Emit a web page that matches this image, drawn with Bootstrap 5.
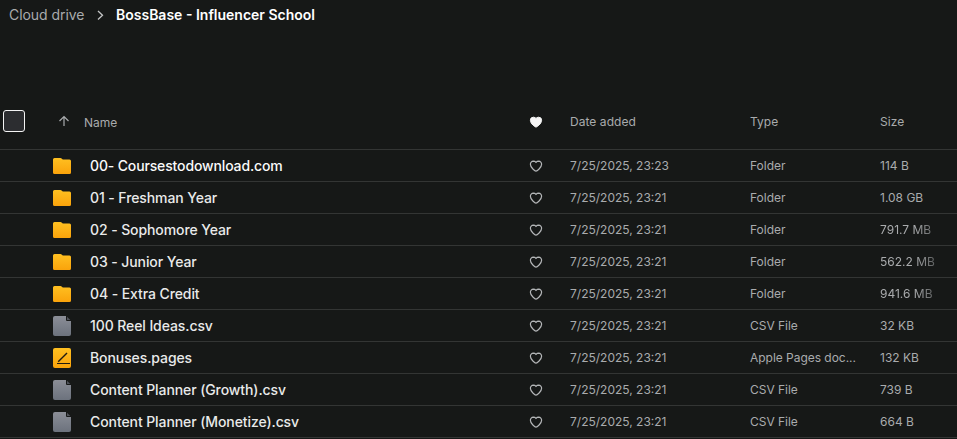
<!DOCTYPE html>
<html lang="en">
<head>
<meta charset="utf-8">
<meta name="viewport" content="width=device-width, initial-scale=1">
<title>Cloud drive</title>
<link href="https://cdn.jsdelivr.net/npm/bootstrap@5.3.0/dist/css/bootstrap.min.css" rel="stylesheet">
<style>
body{background:#161817;color:#a9abad;font-family:Inter,"Liberation Sans",sans-serif;font-size:12px;line-height:20px;height:439px;overflow:hidden}
.crumbs{height:93px;padding:5px 0 0 9px;font-size:14px}
.crumbs svg{margin:0 12px 0 12px}
.crumb-link{color:#a9abad;width:76px;white-space:nowrap;letter-spacing:-.05px}
.crumb-current{color:#fff;font-weight:600}
.files{table-layout:fixed;width:957px;border-collapse:separate;border-spacing:0}
.files th{height:57px;padding:0;font-weight:400;border-bottom:1px solid #333534;vertical-align:middle}
.files th.head-text{padding-top:2px;letter-spacing:.05px}
.files td{height:32px;padding:0;border-bottom:1px solid #333534;vertical-align:middle;white-space:nowrap}
.files svg,.crumbs svg{display:block}
.pick{width:22px;height:22px;border:1px solid #f4f4f4;border-radius:3px;background:#2c2d30;margin-left:3px}
.head-name{padding-top:3px}
.file-name{display:block;color:#e9eaea;font-size:14px;font-weight:500;letter-spacing:-.09px}
.file-name.first{color:#fafafa;letter-spacing:-.14px}
.kind{width:108px;letter-spacing:-.03px}
.fade-end{display:block;width:60px;overflow:hidden;-webkit-mask-image:linear-gradient(90deg,#000 34px,transparent 74px);mask-image:linear-gradient(90deg,#000 34px,transparent 74px)}
</style>
</head>
<body>
<svg width="0" height="0" class="position-absolute" aria-hidden="true">
<defs>
<linearGradient id="gold" x2="0" y2="1"><stop stop-color="#ffc021"/><stop offset="1" stop-color="#faa30b"/></linearGradient>
<linearGradient id="steel" x2="0" y2="1"><stop stop-color="#8b8e97"/><stop offset="1" stop-color="#6c727d"/></linearGradient>
<symbol id="folder" viewBox="0 0 20 22"><path fill="url(#gold)" d="M1 4.500A1.500 1.500 0 0 1 2.500 3H8.500q.7 0 1.100.400L10.800 4.500H17.500A1.500 1.500 0 0 1 19 6V17.500A1.500 1.500 0 0 1 17.500 19H2.500A1.500 1.500 0 0 1 1 17.500Z"/></symbol>
<symbol id="sheet" viewBox="0 0 20 22"><path fill="url(#steel)" d="M3 1H14L19 6V19a2 2 0 0 1-2 2H3a2 2 0 0 1-2-2V3a2 2 0 0 1 2-2Z"/><path fill="#161817" d="M14 1V5a1 1 0 0 0 1 1H19V1Z"/><path fill="#50535a" d="M15 1.700V4.700Q15 5 15.300 5H18.300Z"/></symbol>
<symbol id="pages" viewBox="0 0 20 22"><rect x="1" y="1" width="18" height="20" rx="2" fill="url(#gold)"/><path fill="none" stroke="#211c12" d="M5 16.500H18"/><path fill="none" stroke="#211c12" stroke-width="1.400" d="M6.200 14.800L15 6"/></symbol>
<symbol id="heart" viewBox="0 0 14 13"><path d="M7 12.100C6.200 12.100 1.400 8.800 1.400 5.300A3 3 0 0 1 4.300 2.200C5.500 2.200 6.500 2.800 7 3.400C7.500 2.800 8.500 2.200 9.700 2.200A3 3 0 0 1 12.600 5.300C12.600 8.800 7.800 12.100 7 12.100Z"/></symbol>
</defs>
</svg>
<nav class="crumbs d-flex align-items-start" aria-label="Breadcrumb">
<span class="crumb-link">Cloud drive</span>
<svg class="mt-1" width="7" height="12" viewBox="0 0 7 12" fill="none" stroke="#c4c5c6" stroke-width="1.300"><path d="M1 2l4.500 4.200L1 10.400"/></svg>
<span class="crumb-current">BossBase - Influencer School</span>
</nav>
<table class="files">
<colgroup><col style="width:52px"><col style="width:38px"><col style="width:439px"><col style="width:41px"><col style="width:180px"><col style="width:130px"><col></colgroup>
<thead><tr>
<th><div class="pick"></div></th>
<th colspan="2"><div class="d-flex align-items-center"><svg width="12" height="12" viewBox="0 0 12 12" fill="none" stroke="#a9abad" stroke-width="1.200" style="margin:0 14px 0 6px"><path d="M6 11V1.500M1.500 6L6 1.500L10.500 6"/></svg><span class="head-name">Name</span></div></th>
<th><svg width="14" height="13" fill="#f6f6f6" stroke="#f6f6f6"><use href="#heart"/></svg></th>
<th class="head-text">Date added</th><th class="head-text">Type</th><th class="head-text">Size</th>
</tr></thead>
<tbody id="rows"></tbody>
</table>
<script src="https://cdn.jsdelivr.net/npm/bootstrap@5.3.0/dist/js/bootstrap.bundle.min.js"></script>
<script>
const files=[
["folder","00- Coursestodownload.com","23:23","Folder","114 B"],
["folder","01 - Freshman Year","23:21","Folder","1.08 GB"],
["folder","02 - Sophomore Year","23:21","Folder","791.7 MB"],
["folder","03 - Junior Year","23:21","Folder","562.2 MB"],
["folder","04 - Extra Credit","23:21","Folder","941.6 MB"],
["sheet","100 Reel Ideas.csv","23:21","CSV File","32 KB"],
["pages","Bonuses.pages","23:21","Apple Pages doc...","132 KB"],
["sheet","Content Planner (Growth).csv","23:21","CSV File","739 B"],
["sheet","Content Planner (Monetize).csv","23:21","CSV File","664 B"]];
document.getElementById("rows").innerHTML=files.map(([icon,name,time,kind,size],i)=>`<tr><td></td>
<td><svg width="20" height="22"><use href="#${icon}"/></svg></td>
<td><span class="file-name${i?"":" first"}">${name}</span></td>
<td><svg width="14" height="13" fill="none" stroke="#b4b6b8" stroke-width="1.200"><use href="#heart"/></svg></td>
<td>7/25/2025, ${time}</td>
<td><div class="kind">${kind}</div></td>
<td><span class="${size.endsWith("MB")?"fade-end":""}">${size}</span></td></tr>`).join("");
</script>
</body>
</html>
